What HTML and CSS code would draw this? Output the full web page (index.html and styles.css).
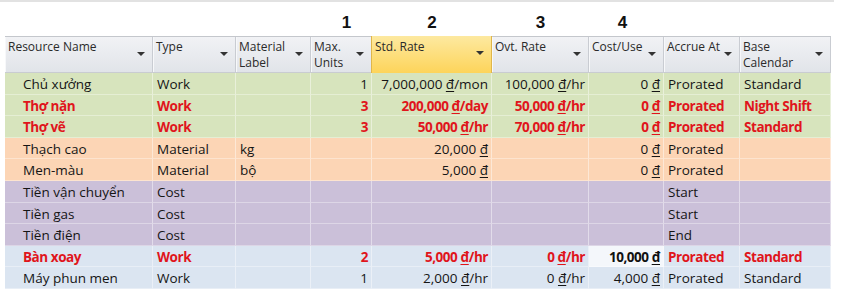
FILE: index.html
```html
<!DOCTYPE html>
<html>
<head>
<meta charset="utf-8">
<link rel="stylesheet" href="styles.css">
</head>
<body>
<div class="topline"></div>
<div class="sheet">
  <div class="grid nums">
    <div></div><div></div><div></div>
    <div class="num n1">1</div><div class="num">2</div><div class="num">3</div><div class="num n4">4</div>
    <div></div><div></div>
  </div>
  <div class="grid head">
    <div class="h">Resource Name<span class="arr"></span></div>
    <div class="h">Type<span class="arr"></span></div>
    <div class="h">Material<br>Label<span class="arr"></span></div>
    <div class="h">Max.<br>Units<span class="arr"></span></div>
    <div class="h sel">Std. Rate<span class="arr"></span></div>
    <div class="h">Ovt. Rate<span class="arr"></span></div>
    <div class="h">Cost/Use<span class="arr"></span></div>
    <div class="h">Accrue At<span class="arr"></span></div>
    <div class="h">Base<br>Calendar<span class="arr"></span></div>
  </div>

  <div class="grid row green">
    <div class="c name">Chủ xưởng</div><div class="c">Work</div><div class="c"></div><div class="c r">1</div>
    <div class="c r">7,000,000 <u>đ</u>/mon</div><div class="c r">100,000 <u>đ</u>/hr</div><div class="c r">0 <u>đ</u></div>
    <div class="c">Prorated</div><div class="c">Standard</div>
  </div>
  <div class="grid row green red">
    <div class="c name">Thợ nặn</div><div class="c">Work</div><div class="c"></div><div class="c r">3</div>
    <div class="c r">200,000 <u>đ</u>/day</div><div class="c r">50,000 <u>đ</u>/hr</div><div class="c r">0 <u>đ</u></div>
    <div class="c">Prorated</div><div class="c">Night Shift</div>
  </div>
  <div class="grid row green red">
    <div class="c name">Thợ vẽ</div><div class="c">Work</div><div class="c"></div><div class="c r">3</div>
    <div class="c r">50,000 <u>đ</u>/hr</div><div class="c r">70,000 <u>đ</u>/hr</div><div class="c r">0 <u>đ</u></div>
    <div class="c">Prorated</div><div class="c">Standard</div>
  </div>
  <div class="grid row orange">
    <div class="c name">Thạch cao</div><div class="c">Material</div><div class="c">kg</div><div class="c r"></div>
    <div class="c r">20,000 <u>đ</u></div><div class="c r"></div><div class="c r">0 <u>đ</u></div>
    <div class="c">Prorated</div><div class="c"></div>
  </div>
  <div class="grid row orange">
    <div class="c name">Men-màu</div><div class="c">Material</div><div class="c">bộ</div><div class="c r"></div>
    <div class="c r">5,000 <u>đ</u></div><div class="c r"></div><div class="c r">0 <u>đ</u></div>
    <div class="c">Prorated</div><div class="c"></div>
  </div>
  <div class="grid row purple">
    <div class="c name">Tiền vận chuyển</div><div class="c">Cost</div><div class="c"></div><div class="c"></div>
    <div class="c"></div><div class="c"></div><div class="c"></div>
    <div class="c">Start</div><div class="c"></div>
  </div>
  <div class="grid row purple">
    <div class="c name">Tiền gas</div><div class="c">Cost</div><div class="c"></div><div class="c"></div>
    <div class="c"></div><div class="c"></div><div class="c"></div>
    <div class="c">Start</div><div class="c"></div>
  </div>
  <div class="grid row purple">
    <div class="c name">Tiền điện</div><div class="c">Cost</div><div class="c"></div><div class="c"></div>
    <div class="c"></div><div class="c"></div><div class="c"></div>
    <div class="c">End</div><div class="c"></div>
  </div>
  <div class="grid row blue red">
    <div class="c name">Bàn xoay</div><div class="c">Work</div><div class="c"></div><div class="c r">2</div>
    <div class="c r">5,000 <u>đ</u>/hr</div><div class="c r">0 <u>đ</u>/hr</div><div class="c r active">10,000 <u>đ</u></div>
    <div class="c">Prorated</div><div class="c">Standard</div>
  </div>
  <div class="grid row blue">
    <div class="c name">Máy phun men</div><div class="c">Work</div><div class="c"></div><div class="c r">1</div>
    <div class="c r">2,000 <u>đ</u>/hr</div><div class="c r">0 <u>đ</u>/hr</div><div class="c r">4,000 <u>đ</u></div>
    <div class="c">Prorated</div><div class="c">Standard</div>
  </div>
</div>
</body>
</html>
```

FILE: styles.css
```css
html, body {
  margin: 0;
  padding: 0;
  background: #ffffff;
}
body {
  font-family: "Open Sans", "Liberation Sans", sans-serif;
  color: #151515;
}
.topline {
  width: 834px;
  height: 2px;
  background: #e2e2e2;
}
.sheet {
  padding-left: 5px;
}
.grid {
  display: grid;
  grid-template-columns: 148px 83px 75px 61px 120px 97px 75px 76px 91px;
  width: 826px;
}
.nums {
  height: 34px;
  align-items: end;
}
.num {
  font-family: "Liberation Sans", sans-serif;
  font-weight: bold;
  font-size: 17px;
  text-align: center;
  line-height: 20px;
  padding-bottom: 3px;
  color: #111;
}
.n1 { padding-left: 10px; }
.n4 { padding-right: 8px; }
.head {
  height: 37px;
  border-top: 1px solid #c4c7cc;
  border-bottom: 1px solid #c9ccd1;
  box-sizing: border-box;
  background: linear-gradient(#f1f2f5, #e1e4e9);
}
.h {
  position: relative;
  font-size: 12px;
  line-height: 16px;
  padding: 2px 0 0 3px;
  color: #2a2a2a;
  border-right: 1px solid #c9ccd2;
  box-shadow: inset 1px 0 0 #f7f8fa;
}
.h.sel {
  background: linear-gradient(#fde9a0, #fdd45a);
  border-right: 1px solid #e0b64a;
  border-left: 1px solid #e0b64a;
  margin-left: -1px;
  margin-top: -1px;
  margin-bottom: -1px;
  padding-top: 3px;
  box-shadow: none;
}
.arr {
  position: absolute;
  right: 7px;
  top: 15px;
  width: 0;
  height: 0;
  border-left: 4px solid transparent;
  border-right: 4px solid transparent;
  border-top: 4px solid #333;
}
.row {
  height: 21.6px;
}
.c {
  font-size: 13.5px;
  line-height: 21px;
  padding: 1px 3px 0 4px;
  box-sizing: border-box;
  white-space: nowrap;
  overflow: hidden;
  border-right: 1px solid rgba(255, 255, 255, 0.45);
  border-bottom: 1px solid rgba(255, 255, 255, 0.35);
}
.c.name {
  padding-left: 18px;
}
.c.r {
  text-align: right;
}
.green .c { background: #d7e4bd; }
.orange .c { background: #fcd5b5; }
.purple .c { background: #cbc0d9; }
.blue .c { background: #dbe5f1; }
.red .c {
  color: #e0151c;
  font-weight: bold;
  font-size: 13.5px;
  letter-spacing: -0.45px;
}
.red .c.active {
  background: #f4f7fb;
  color: #111;
}
u {
  text-decoration: underline;
  text-underline-offset: 2px;
  text-decoration-thickness: 1px;
}
```
